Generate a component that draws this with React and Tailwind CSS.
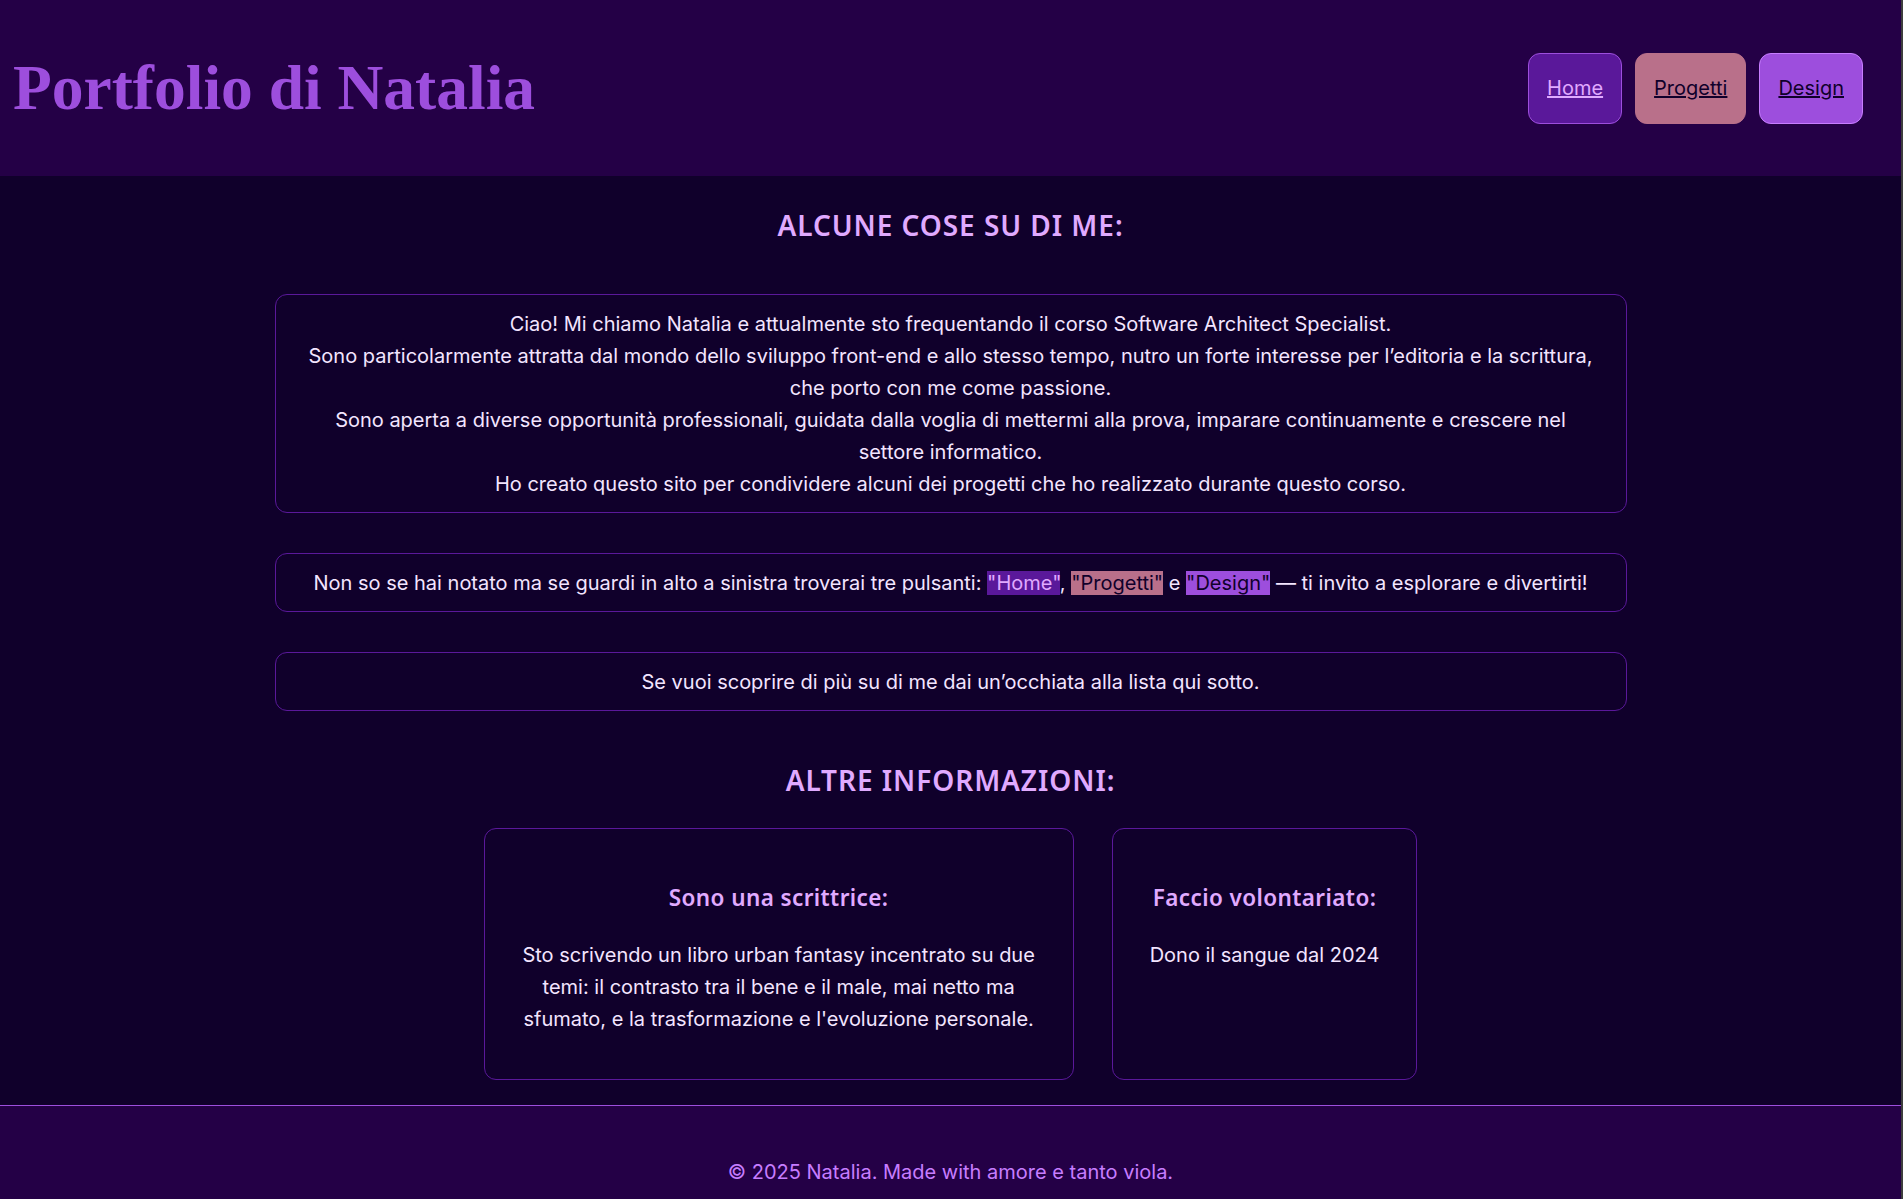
const body = "font-['Inter',_'Liberation_Sans',_sans-serif]";
const heading = "font-['Noto_Sans',_'Lato',_sans-serif]";

function NavButton({ label, className }) {
  return (
    <a
      href="#"
      className={`rounded-[12px] border px-[18px] py-[18px] text-[20px] leading-[33px] underline ${className}`}
    >
      {label}
    </a>
  );
}

function Box({ children }) {
  return (
    <div className="w-[1352px] rounded-[12px] border border-[#5a189a] px-[28px] py-[12.5px] text-center text-[20px] leading-[32px] text-[#f3e5ff]">
      {children}
    </div>
  );
}

function InfoCard({ title, text, className }) {
  return (
    <div
      className={`flex flex-col items-center rounded-[12px] border border-[#5a189a] px-[37px] pt-[55px] pb-[44px] text-center ${className}`}
    >
      <h3 className={`${heading} text-[22.5px] font-semibold leading-[28px] tracking-[0.4px] text-[#e0aaff]`}>
        {title}
      </h3>
      <p className="mt-[27px] text-[20px] leading-[32px] text-[#f3e5ff]">{text}</p>
    </div>
  );
}

export default function App() {
  return (
    <div className={`${body} min-h-screen border-r-2 border-[#3d3d3d] bg-[#10002b]`}>
      <header className="flex h-[176px] items-center justify-between bg-[#240046] pl-[13px] pr-[38px]">
        <h1 className="font-['Liberation_Serif',_serif] text-[63.5px] font-bold leading-none text-[#9d4edd]">
          Portfolio di Natalia
        </h1>
        <nav className="flex gap-[13px]">
          <NavButton label="Home" className="border-[#9d4edd] bg-[#5a189a] text-[#e0aaff]" />
          <NavButton label="Progetti" className="border-[#b9708a] bg-[#b9708a] text-[#10002b]" />
          <NavButton label="Design" className="border-[#c77dff] bg-[#9d4edd] text-[#10002b]" />
        </nav>
      </header>

      <main className="flex flex-col items-center pt-[32px] pb-[25px]">
        <h2 className={`${heading} text-[28px] font-semibold leading-[34px] tracking-[0.95px] text-[#e0aaff]`}>
          ALCUNE COSE SU DI ME:
        </h2>

        <div className="mt-[52px] flex flex-col items-center gap-[40px]">
          <Box>
            Ciao! Mi chiamo Natalia e attualmente sto frequentando il corso Software Architect Specialist.
            <br />
            Sono particolarmente attratta dal mondo dello sviluppo front-end e allo stesso tempo, nutro un forte
            interesse per l’editoria e la scrittura, che porto con me come passione.
            <br />
            Sono aperta a diverse opportunità professionali, guidata dalla voglia di mettermi alla prova, imparare
            continuamente e crescere nel settore informatico.
            <br />
            Ho creato questo sito per condividere alcuni dei progetti che ho realizzato durante questo corso.
          </Box>
          <Box>
            Non so se hai notato ma se guardi in alto a sinistra troverai tre pulsanti:{" "}
            <span className="bg-[#5a189a] text-[#e0aaff]">"Home"</span>,{" "}
            <span className="bg-[#b9708a] text-[#10002b]">"Progetti"</span> e{" "}
            <span className="bg-[#9d4edd] text-[#10002b]">"Design"</span> — ti invito a esplorare e divertirti!
          </Box>
          <Box>Se vuoi scoprire di più su di me dai un’occhiata alla lista qui sotto.</Box>
        </div>

        <h2 className={`${heading} mt-[52px] text-[28px] font-semibold leading-[34px] tracking-[0.95px] text-[#e0aaff]`}>
          ALTRE INFORMAZIONI:
        </h2>

        <div className="mt-[31px] flex justify-center gap-[38px]">
          <InfoCard
            className="w-[590px]"
            title="Sono una scrittrice:"
            text="Sto scrivendo un libro urban fantasy incentrato su due temi: il contrasto tra il bene e il male, mai netto ma sfumato, e la trasformazione e l'evoluzione personale."
          />
          <InfoCard title="Faccio volontariato:" text="Dono il sangue dal 2024" />
        </div>
      </main>

      <footer className="border-t border-[#9d4edd] bg-[#240046] pt-[50px] pb-[50px] text-center text-[20px] leading-[32px] text-[#c77dff]">
        © 2025 Natalia. Made with amore e tanto viola.
      </footer>
    </div>
  );
}
